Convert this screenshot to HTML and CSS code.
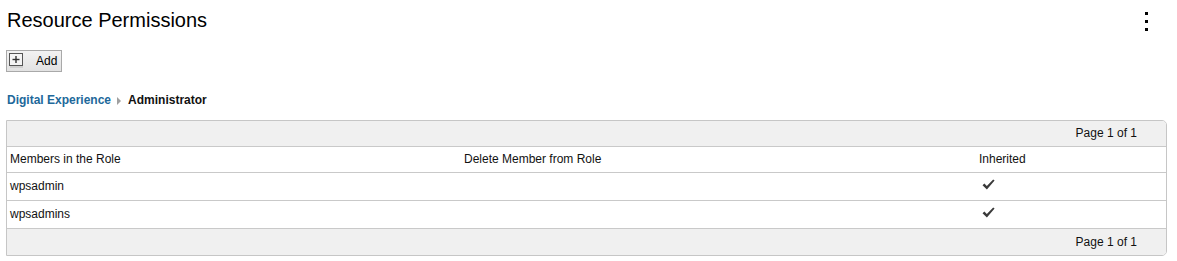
FILE: index.html
```html
<!DOCTYPE html>
<html>
<head>
<meta charset="utf-8">
<link rel="stylesheet" href="styles.css">
</head>
<body>
<div class="page">
  <div class="titlebar">
    <h1 class="title">Resource Permissions</h1>
    <button class="kebab" aria-label="More actions"><span></span><span></span><span></span></button>
  </div>
  <div class="toolbar">
    <button class="addbtn">
      <svg class="plus" width="15" height="15" viewBox="0 0 15 15">
        <rect x="0.5" y="0.5" width="13" height="12" fill="#f4f4f4" stroke="#555"/>
        <line x1="1" y1="14" x2="14" y2="14" stroke="#bbb"/>
        <line x1="7" y1="3" x2="7" y2="10" stroke="#333" stroke-width="1.4"/>
        <line x1="3.5" y1="6.5" x2="10.5" y2="6.5" stroke="#333" stroke-width="1.4"/>
      </svg>
      <span class="addlabel">Add</span>
    </button>
  </div>
  <div class="crumbs">
    <a class="crumb-link">Digital Experience</a>
    <span class="crumb-sep"></span>
    <span class="crumb-current">Administrator</span>
  </div>
  <div class="table">
    <div class="pager">Page 1 of 1</div>
    <div class="row head">
      <div class="cell">Members in the Role</div>
      <div class="cell">Delete Member from Role</div>
      <div class="cell">Inherited</div>
    </div>
    <div class="row">
      <div class="cell">wpsadmin</div>
      <div class="cell"></div>
      <div class="cell"><svg class="check" width="13" height="11" viewBox="0 0 13 11"><path d="M0.5 6.2 L2.4 4.6 L4.8 7 L11.2 0.4 L12.6 1.6 L4.9 10.4 Z" fill="#3a3a3a"/></svg></div>
    </div>
    <div class="row">
      <div class="cell">wpsadmins</div>
      <div class="cell"></div>
      <div class="cell"><svg class="check" width="13" height="11" viewBox="0 0 13 11"><path d="M0.5 6.2 L2.4 4.6 L4.8 7 L11.2 0.4 L12.6 1.6 L4.9 10.4 Z" fill="#3a3a3a"/></svg></div>
    </div>
    <div class="pager foot">Page 1 of 1</div>
  </div>
</div>
</body>
</html>
```

FILE: styles.css
```css
html, body {
  margin: 0;
  padding: 0;
  background: #fff;
}
body {
  font-family: "Liberation Sans", Arial, sans-serif;
  color: #000;
}
.page {
  padding: 8px 10px 0 6px;
}
.titlebar {
  display: flex;
  justify-content: space-between;
  align-items: flex-start;
  height: 24px;
}
.title {
  margin: 0 0 0 1px;
  font-size: 20px;
  font-weight: normal;
  line-height: 24px;
}
.kebab {
  display: flex;
  flex-direction: column;
  gap: 5px;
  margin: 4px 19px 0 0;
  padding: 0;
  border: 0;
  background: none;
}
.kebab span {
  display: block;
  width: 3px;
  height: 3px;
  background: #000;
}
.toolbar {
  margin-top: 18px;
  height: 22px;
}
.addbtn {
  display: flex;
  align-items: center;
  box-sizing: border-box;
  width: 56px;
  height: 22px;
  padding: 0 0 0 2px;
  border: 1px solid #a9a9a9;
  background: linear-gradient(#f2f2f2, #e2e2e2);
  font-family: "Liberation Sans", Arial, sans-serif;
  font-size: 12px;
  color: #000;
}
.plus {
  display: block;
  margin-top: -2px;
}
.addlabel {
  margin-left: 12px;
}
.crumbs {
  display: flex;
  align-items: center;
  margin: 21px 0 0 1px;
  height: 14px;
  font-size: 12px;
  font-weight: bold;
  line-height: 14px;
}
.crumb-link {
  color: #21689a;
}
.crumb-sep {
  width: 0;
  height: 0;
  margin: 2px 7px 0 6px;
  border-top: 4px solid transparent;
  border-bottom: 4px solid transparent;
  border-left: 4px solid #a0a0a0;
}
.crumb-current {
  color: #111;
}
.table {
  margin-top: 13px;
  width: 1161px;
  box-sizing: border-box;
  border: 1px solid #c6c6c6;
  border-radius: 0 5px 5px 0;
  overflow: hidden;
  font-size: 12px;
}
.pager {
  height: 25px;
  line-height: 25px;
  background: #f0f0f0;
  text-align: right;
  padding-right: 29px;
  color: #111;
}
.foot {
  border-top: 1px solid #c9c9c9;
  height: 26px;
  line-height: 26px;
}
.row {
  display: grid;
  grid-template-columns: 454px 515px 1fr;
  height: 27px;
  border-top: 1px solid #c9c9c9;
  align-items: center;
}
.row.head {
  height: 25px;
}
.cell {
  padding: 0 0 2px 3px;
  color: #111;
}
.check {
  display: block;
  margin-left: 3px;
  margin-top: -2px;
}
```
